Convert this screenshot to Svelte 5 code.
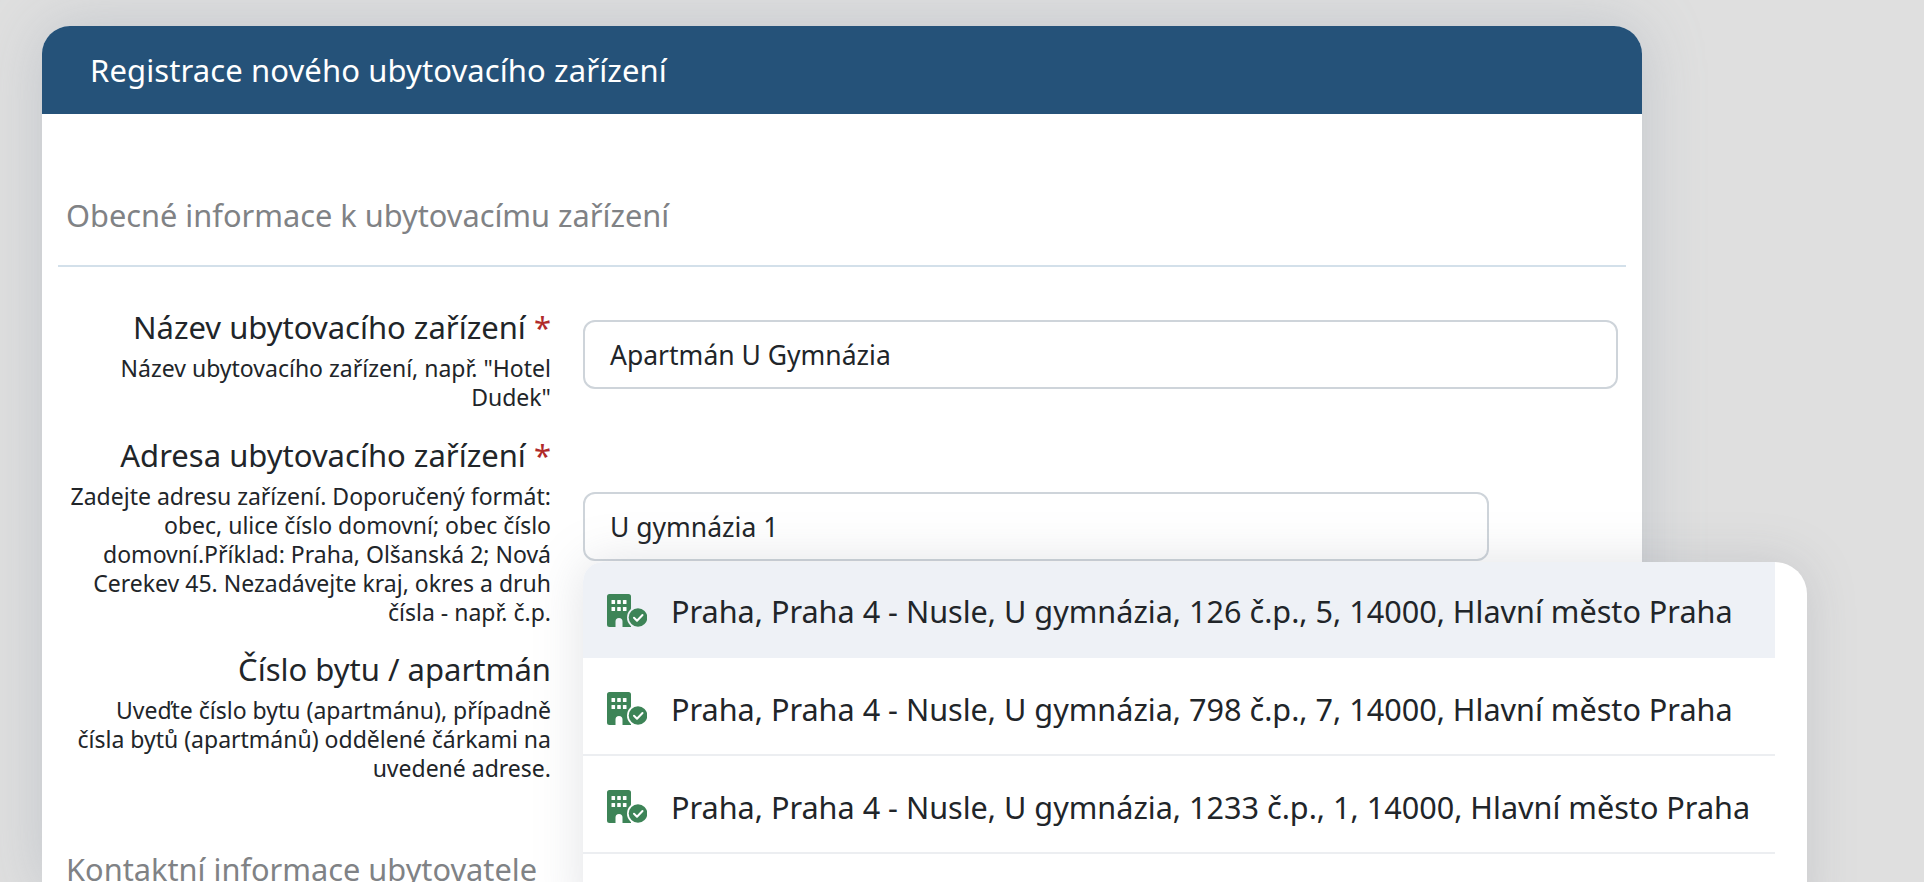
<script>
  const rows = [
    'Praha, Praha 4 - Nusle, U gymnázia, 126 č.p., 5, 14000, Hlavní město Praha',
    'Praha, Praha 4 - Nusle, U gymnázia, 798 č.p., 7, 14000, Hlavní město Praha',
    'Praha, Praha 4 - Nusle, U gymnázia, 1233 č.p., 1, 14000, Hlavní město Praha'
  ];
</script>

<div class="page">
  <div class="card">
    <div class="head">Registrace nového ubytovacího zařízení</div>
    <div class="body">
      <h2 class="section">Obecné informace k ubytovacímu zařízení</h2>
      <div class="row r1">
        <div class="lab">
          <div class="name">Název ubytovacího zařízení <span class="req">*</span></div>
          <div class="help">Název ubytovacího zařízení, např. "Hotel<br />Dudek"</div>
        </div>
        <div class="ctl c1"><div class="input">Apartmán U Gymnázia</div></div>
      </div>
      <div class="row r2">
        <div class="lab">
          <div class="name">Adresa ubytovacího zařízení <span class="req">*</span></div>
          <div class="help">Zadejte adresu zařízení. Doporučený formát:<br />obec, ulice číslo domovní; obec číslo<br />domovní.Příklad: Praha, Olšanská 2; Nová<br />Cerekev 45. Nezadávejte kraj, okres a druh<br />čísla - např. č.p.</div>
        </div>
        <div class="ctl c2">
          <div class="input short">U gymnázia 1</div>
          <div class="menu">
            {#each rows as r, i}
              <div class="item" class:active={i === 0}>
                <svg class="ico" viewBox="0 0 40 33" width="40" height="33" aria-hidden="true">
                  <path fill="#3d8457" d="M2.500 0h19A2.500 2.500 0 0 1 24 2.500V33h-8.500v-5.500a3.500 3.500 0 0 0-7 0V33h-6A2.500 2.500 0 0 1 0 30.500v-28A2.500 2.500 0 0 1 2.500 0z"/>
                  <g fill="#fff">
                    <rect x="4.500" y="6" width="3.600" height="4" rx=".6"/><rect x="10.200" y="6" width="3.600" height="4" rx=".6"/><rect x="15.900" y="6" width="3.600" height="4" rx=".6"/>
                    <rect x="4.500" y="13" width="3.600" height="4" rx=".6"/><rect x="10.200" y="13" width="3.600" height="4" rx=".6"/><rect x="15.900" y="13" width="3.600" height="4" rx=".6"/>
                  </g>
                  <circle cx="31" cy="23.500" r="11" fill={i === 0 ? '#eef1f6' : '#fff'}/>
                  <circle cx="31" cy="23.500" r="9.300" fill="#3d8457"/>
                  <path d="M27 23.800l3 3 5.500-5.800" fill="none" stroke="#fff" stroke-width="2" stroke-linecap="round" stroke-linejoin="round"/>
                </svg>
                <span class="txt">{r}</span>
              </div>
            {/each}
            <div class="item empty"></div>
          </div>
        </div>
      </div>
      <div class="row r3">
        <div class="lab">
          <div class="name">Číslo bytu / apartmán</div>
          <div class="help">Uveďte číslo bytu (apartmánu), případně<br />čísla bytů (apartmánů) oddělené čárkami na<br />uvedené adrese.</div>
        </div>
      </div>
      <h2 class="section s2">Kontaktní informace ubytovatele</h2>
    </div>
  </div>
</div>

<style>
  :global(body) {
    margin: 0;
    background: #dfdfdf;
    overflow: hidden;
  }
  .page {
    height: 882px;
    overflow: hidden;
    padding: 26px 0 0 42px;
    box-sizing: border-box;
    font-family: "Noto Sans", Roboto, sans-serif;
    color: #212529;
  }
  .card {
    width: 1600px;
    border-radius: 28px 28px 0 0;
    background: #fff;
    box-shadow: 0 0 60px rgba(150, 160, 175, 0.4);
  }
  .head {
    height: 88px;
    padding-left: 48px;
    display: flex;
    align-items: center;
    background: #255279;
    color: #fff;
    font-size: 31px;
    letter-spacing: 0.1px;
    border-radius: 28px 28px 0 0;
  }
  .body {
    padding: 0 16px;
  }
  .section {
    margin: 0;
    padding: 81px 0 30px 8px;
    border-bottom: 2px solid #d3e0ea;
    font-size: 30.75px;
    line-height: 40px;
    font-weight: 400;
    color: #808285;
  }
  .s2 {
    padding: 0 0 0 8px;
    border: 0;
    margin-top: 66px;
  }
  .row {
    display: flex;
    gap: 32px;
  }
  .r1 {
    margin-top: 40px;
  }
  .r2 {
    margin-top: 23px;
  }
  .r3 {
    margin-top: 22px;
  }
  .lab {
    width: 493px;
    flex: none;
    text-align: right;
  }
  .name {
    font-size: 31px;
    line-height: 40px;
    white-space: nowrap;
  }
  .req {
    color: #b02a2a;
  }
  .help {
    font-size: 23px;
    line-height: 29px;
    margin-top: 7px;
    white-space: nowrap;
  }
  .ctl {
    flex: 1;
    position: relative;
  }
  .c1 {
    padding-top: 13px;
  }
  .c2 {
    padding-top: 57px;
  }
  .input {
    height: 69px;
    width: 1035px;
    box-sizing: border-box;
    border: 2px solid #ced4da;
    border-radius: 12px;
    padding-left: 25px;
    display: flex;
    align-items: center;
    font-size: 26.5px;
    background: #fff;
  }
  .short {
    width: 906px;
  }
  .menu {
    position: absolute;
    left: 0;
    top: 127px;
    width: 1224px;
    height: 360px;
    padding-right: 32px;
    box-sizing: border-box;
    background: #fff;
    border-radius: 20px 32px 0 0;
    box-shadow: 0 0 50px rgba(120, 125, 135, 0.22);
    z-index: 2;
  }
  .item {
    height: 98px;
    box-sizing: border-box;
    display: flex;
    align-items: center;
    padding: 4px 0 0 24px;
    gap: 24px;
    border-bottom: 2px solid #eceef1;
    font-size: 30.6px;
    white-space: nowrap;
  }
  .active {
    height: 96px;
    padding-top: 0;
    border-bottom: 0;
    border-top-left-radius: 20px;
    background: #eef1f6;
  }
  .ico {
    flex: none;
  }
  .txt {
    padding-top: 1px;
  }
</style>
